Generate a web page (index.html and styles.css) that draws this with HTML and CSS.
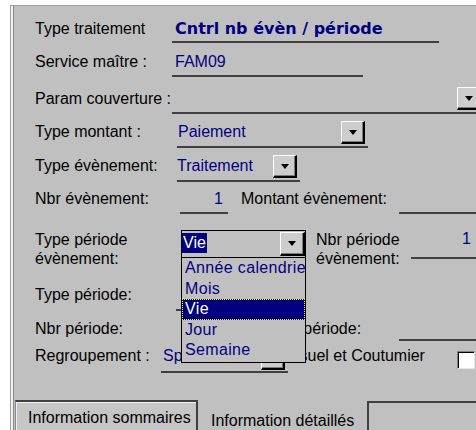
FILE: index.html
```html
<!DOCTYPE html>
<html lang="fr">
<head>
<meta charset="utf-8">
<title>Traitement</title>
<link rel="stylesheet" href="styles.css">
</head>
<body>
<div class="form">
  <div class="row r1">
    <span class="lbl w137">Type traitement</span>
    <span class="field f-title">Cntrl nb évèn / période</span>
  </div>
  <div class="row r2">
    <span class="lbl w137">Service maître :</span>
    <span class="field f-service">FAM09</span>
  </div>
  <div class="row r3">
    <span class="lbl w137">Param couverture :</span>
    <span class="combo c-param"><span class="val"></span><span class="btn"><i class="arrow"></i></span></span>
  </div>
  <div class="row r4">
    <span class="lbl w142">Type montant :</span>
    <span class="combo c-montant"><span class="val">Paiement</span><span class="btn"><i class="arrow"></i></span></span>
  </div>
  <div class="row r5">
    <span class="lbl w142">Type évènement:</span>
    <span class="combo c-event"><span class="val">Traitement</span><span class="btn"><i class="arrow"></i></span></span>
  </div>
  <div class="row r6">
    <span class="lbl w145">Nbr évènement:</span>
    <span class="field f-num">1</span>
    <span class="lbl lbl-mid">Montant évènement:</span>
    <span class="field f-right"></span>
  </div>
  <div class="row r7">
    <span class="lbl lbl-2l w146">Type période<br>évènement:</span>
    <div class="dropdown">
      <span class="selected">Vie</span>
      <span class="btn btn-open"><i class="arrow"></i></span>
      <ul class="list">
        <li>Année calendrier</li>
        <li>Mois</li>
        <li class="current">Vie</li>
        <li>Jour</li>
        <li>Semaine</li>
      </ul>
    </div>
    <span class="lbl lbl-2l lbl-nbr">Nbr période<br>évènement:</span>
    <span class="field f-nbr">1</span>
  </div>
  <div class="row r8">
    <span class="lbl w141">Type période:</span>
    <span class="combo c-periode"><span class="val"></span><span class="btn"><i class="arrow"></i></span></span>
  </div>
  <div class="row r9">
    <span class="lbl w147">Nbr période:</span>
    <span class="field f-num2"></span>
    <span class="lbl lbl-mid">Montant période:</span>
    <span class="field f-right2"></span>
  </div>
  <div class="row r10">
    <span class="lbl w126">Regroupement :</span>
    <span class="combo c-regroup"><span class="val">Spécialité</span><span class="btn"><i class="arrow"></i></span></span>
    <span class="lbl lbl-usuel">Usuel et Coutumier</span>
    <span class="check"></span>
  </div>
  <div class="tabs">
    <span class="tab tab-sommaires">Information sommaires</span>
    <span class="tab tab-details">Information détaillés</span>
    <span class="tab-page"></span>
  </div>
</div>
</body>
</html>
```

FILE: styles.css
```css
html, body {
  margin: 0;
  padding: 0;
  overflow: hidden;
  background: #ffffff;
}

body {
  width: 476px;
  height: 430px;
  font-family: "Liberation Sans", Arial, sans-serif;
  font-size: 16px;
  line-height: 18px;
  color: #000000;
}

/* form section with its thin frame on the top and left */
.form {
  margin: 5px 0 0 10px;
  height: 425px;
  box-sizing: border-box;
  background: #c0c0c0;
  border-top: 1px solid #a0a0a0;
  border-left: 1px solid #a0a0a0;
  box-shadow: inset 2px 0 0 #f2f2f2, inset 3px 0 0 #8a8a8a;
  padding: 14px 0 0 24px;
  overflow: hidden;
}

.row {
  display: flex;
  align-items: flex-start;
  white-space: nowrap;
}

.row > * {
  flex: none;
}

.r1 { height: 33px; }
.r2 { height: 37px; }
.r3 { height: 33px; }
.r4 { height: 34px; }
.r5 { height: 33px; }
.r6 { height: 40px; }
.r7 { height: 56px; }
.r8 { height: 34px; }
.r9 { height: 27px; }
.r10 { height: 53px; }

/* labels */
.lbl { display: block; }
.w126 { width: 126px; }
.w137 { width: 137px; }
.w141 { width: 141px; }
.w142 { width: 142px; }
.w145 { width: 145px; }
.w146 { width: 146px; }
.w147 { width: 147px; }

.lbl-2l { line-height: 19px; }
.lbl-mid { margin-left: 13px; width: 158px; }
.lbl-nbr { margin-left: 10px; width: 95px; }
.lbl-usuel { width: 169px; }

/* text boxes drawn as an underline */
.field {
  display: block;
  box-sizing: border-box;
  border-bottom: 2px solid #404040;
  color: #000080;
  overflow: hidden;
}

.f-title {
  width: 267px;
  height: 23px;
  padding-left: 3px;
  font-family: "DejaVu Sans", "Liberation Sans", sans-serif;
  font-weight: bold;
}

.f-service {
  width: 191px;
  height: 24px;
  padding-left: 3px;
}

.f-num {
  width: 48px;
  height: 24px;
  text-align: right;
  padding-right: 5px;
}

.f-right {
  width: 90px;
  height: 24px;
}

.f-nbr {
  width: 70px;
  height: 29px;
  text-align: right;
  padding-right: 10px;
}

.f-num2 {
  width: 46px;
  height: 24px;
}

.f-right2 {
  width: 90px;
  height: 21px;
}

/* combo boxes: value, drop button, underline */
.combo {
  display: flex;
  align-items: flex-start;
  box-sizing: border-box;
  height: 27px;
  margin-top: -2px;
  border-bottom: 2px solid #404040;
  color: #000080;
}

.combo .val {
  flex: 1;
  padding-top: 2px;
  overflow: hidden;
}

.c-param { width: 312px; margin-top: -3px; }
.c-montant { width: 191px; }
.c-montant .val { padding-left: 1px; }
.c-event { width: 123px; }
.c-periode { width: 124px; }
.c-regroup { width: 127px; margin-top: 0; height: 26px; }
.c-regroup .val { padding-top: 0; padding-left: 2px; }

.btn {
  flex: none;
  display: flex;
  align-items: center;
  justify-content: center;
  box-sizing: border-box;
  width: 24px;
  height: 23px;
  margin-right: 3px;
  background: #cdcdcd;
  border-top: 1px solid #ffffff;
  border-left: 1px solid #ffffff;
  border-right: 2px solid #000000;
  border-bottom: 2px solid #000000;
  box-shadow: inset -1px -1px 0 #7a7a7a;
}

.arrow {
  display: block;
  width: 0;
  height: 0;
  border-left: 4px solid transparent;
  border-right: 4px solid transparent;
  border-top: 5px solid #000000;
}

/* the open drop-down with its list */
.dropdown {
  position: relative;
  z-index: 2;
  display: flex;
  align-items: flex-start;
  box-sizing: border-box;
  width: 125px;
  height: 28px;
  border: 1px solid #000000;
  background: #c0c0c0;
}

.selected {
  margin-top: 2px;
  padding: 0 1px;
  line-height: 20px;
  background: #000080;
  color: #ffffff;
}

.btn-open {
  width: 25px;
  height: 24px;
  margin: 1px 0 0 auto;
}

.list {
  position: absolute;
  left: -1px;
  top: 100%;
  box-sizing: border-box;
  width: 125px;
  height: 106px;
  margin: 0;
  padding: 0;
  list-style: none;
  border: 1px solid #000000;
  background: #c0c0c0;
  color: #000080;
  overflow: hidden;
}

.list li {
  height: 20.5px;
  line-height: 20px;
  padding-left: 3px;
  letter-spacing: 0.35px;
  white-space: nowrap;
}

.list .current {
  background: #000080;
  color: #ffffff;
  outline: 1px dotted #ffff00;
  outline-offset: -1px;
}

/* check box */
.check {
  display: block;
  box-sizing: border-box;
  width: 18px;
  height: 18px;
  margin-top: 4px;
  background: #ffffff;
  border-top: 1px solid #808080;
  border-left: 1px solid #808080;
  border-right: 1px solid #e6e6e6;
  border-bottom: 1px solid #e6e6e6;
  box-shadow: inset 1px 1px 0 #000000;
}

/* tab strip at the foot of the form */
.tabs {
  display: flex;
  align-items: flex-start;
  margin-left: -20px;
  height: 40px;
  white-space: nowrap;
}

.tab {
  flex: none;
  display: block;
  box-sizing: border-box;
}

.tab-sommaires {
  width: 183px;
  height: 40px;
  padding: 7px 0 0 12px;
  background: #c6c6c6;
  border-top: 2px solid #404040;
  border-right: 2px solid #404040;
  border-left: 1px solid #8a8a8a;
  box-shadow: inset 1px 1px 0 #f0f0f0;
}

.tab-details {
  width: 169px;
  padding: 12px 0 0 13px;
}

.tab-page {
  flex: 1;
  height: 40px;
  margin-top: 1px;
  border-top: 2px solid #404040;
  border-left: 2px solid #404040;
}
```
